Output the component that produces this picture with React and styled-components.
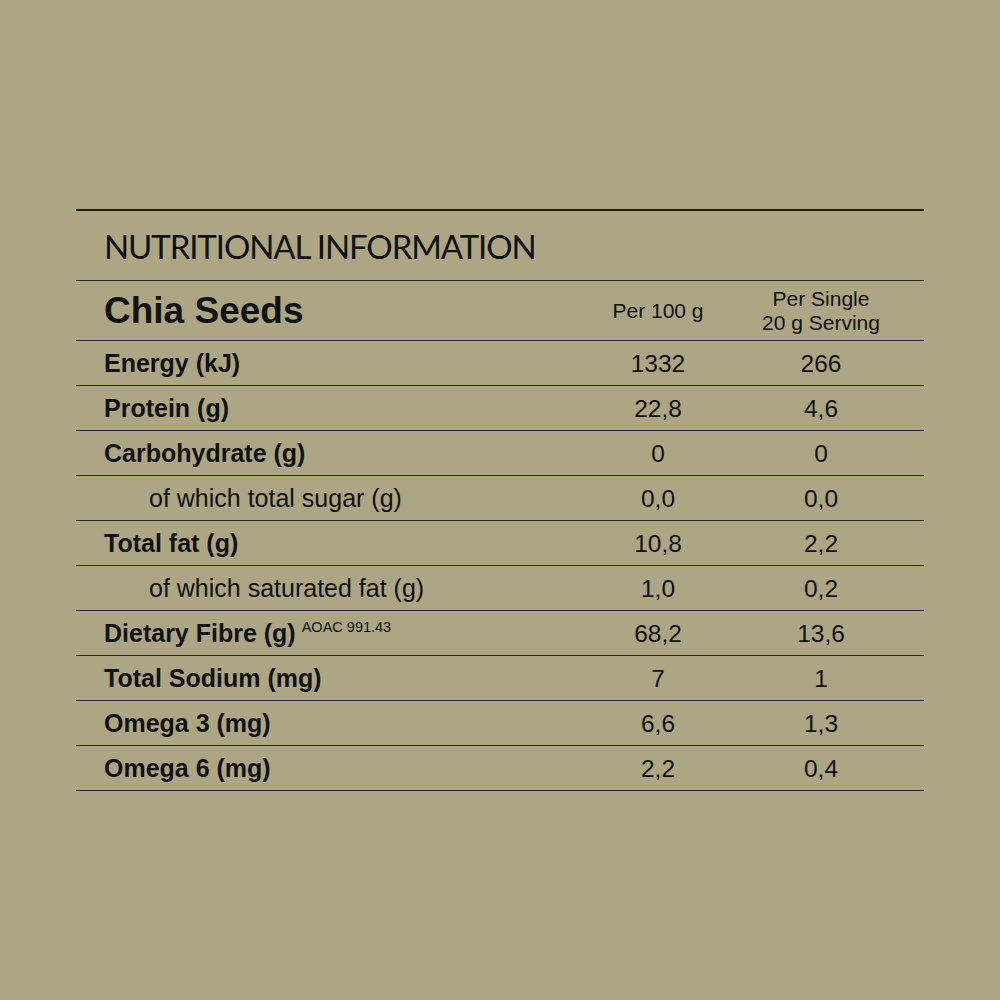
import React from 'react'
import styled, { createGlobalStyle } from 'styled-components'

const GlobalStyle = createGlobalStyle`
  html, body {
    margin: 0;
    background: #aca684;
  }
  body {
    font-family: "Liberation Sans", Arial, sans-serif;
    color: #111;
  }
`

const StyledPage = styled.div`
  width: 1000px;
  height: 1000px;
  box-sizing: border-box;
  padding: 209px 76px 0;
`

const StyledPanel = styled.div`
  border-top: 2px solid #1a1a1a;
`

const StyledTitle = styled.h2`
  margin: 0;
  height: 70px;
  box-sizing: border-box;
  padding-left: 28px;
  display: flex;
  align-items: center;
  font-family: Lato, "Open Sans", sans-serif;
  font-weight: 400;
  font-size: 33px;
  letter-spacing: -1.1px;
  border-bottom: 1px solid #2a2a2a;
`

const StyledRow = styled.div`
  display: grid;
  grid-template-columns: 1fr 164px 162px;
  padding-right: 22px;
  align-items: center;
  height: ${p => (p.$head ? 60 : 45)}px;
  box-sizing: border-box;
  border-bottom: 1px solid #2a2a2a;
`

const StyledLabel = styled.div`
  padding-left: ${p => (p.$sub ? 73 : 28)}px;
  font-size: 25px;
  font-weight: ${p => (p.$sub ? 400 : 700)};
  white-space: nowrap;
  sup {
    font-size: 14.5px;
    font-weight: 400;
    margin-left: 6px;
  }
`

const StyledProduct = styled.div`
  padding-left: 28px;
  font-size: 37px;
  font-weight: 700;
`

const StyledHeadCell = styled.div`
  text-align: center;
  font-size: 21px;
  line-height: 24px;
`

const StyledValue = styled.div`
  text-align: center;
  font-size: 24.5px;
  padding-top: 1px;
`

const rows = [
  { label: 'Energy (kJ)', a: '1332', b: '266' },
  { label: 'Protein (g)', a: '22,8', b: '4,6' },
  { label: 'Carbohydrate (g)', a: '0', b: '0' },
  { label: 'of which total sugar (g)', a: '0,0', b: '0,0', sub: true },
  { label: 'Total fat (g)', a: '10,8', b: '2,2' },
  { label: 'of which saturated fat (g)', a: '1,0', b: '0,2', sub: true },
  { label: 'Dietary Fibre (g)', note: 'AOAC 991.43', a: '68,2', b: '13,6' },
  { label: 'Total Sodium (mg)', a: '7', b: '1' },
  { label: 'Omega 3 (mg)', a: '6,6', b: '1,3' },
  { label: 'Omega 6 (mg)', a: '2,2', b: '0,4' },
]

export default function App() {
  return (
    <StyledPage>
      <GlobalStyle />
      <StyledPanel>
        <StyledTitle>NUTRITIONAL INFORMATION</StyledTitle>
        <StyledRow $head>
          <StyledProduct>Chia Seeds</StyledProduct>
          <StyledHeadCell>Per 100 g</StyledHeadCell>
          <StyledHeadCell>Per Single<br />20 g Serving</StyledHeadCell>
        </StyledRow>
        {rows.map(r => (
          <StyledRow key={r.label}>
            <StyledLabel $sub={r.sub}>
              {r.label}
              {r.note && <sup>{r.note}</sup>}
            </StyledLabel>
            <StyledValue>{r.a}</StyledValue>
            <StyledValue>{r.b}</StyledValue>
          </StyledRow>
        ))}
      </StyledPanel>
    </StyledPage>
  )
}
